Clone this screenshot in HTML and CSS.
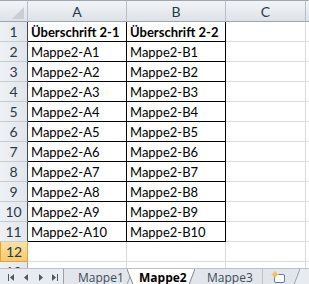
FILE: index.html
```html
<!DOCTYPE html>
<html>
<head>
<meta charset="utf-8">
<link rel="stylesheet" href="styles.css">
</head>
<body>
<div class="sheet">
  <div class="grid">
    <div class="ch corner"><svg width="12" height="12" viewBox="0 0 12 12"><path d="M12 0 L12 12 L0 12 Z" fill="#c9ced5"/></svg></div>
    <div class="ch">A</div>
    <div class="ch">B</div>
    <div class="ch">C</div>
    <div class="ch last"></div>

    <div class="rh dk">1</div><div class="c bl h">Überschrift 2-1</div><div class="c bl h">Überschrift 2-2</div><div class="c"></div><div class="c last"></div>
    <div class="rh dk">2</div><div class="c bl">Mappe2-A1</div><div class="c bl">Mappe2-B1</div><div class="c"></div><div class="c last"></div>
    <div class="rh dk">3</div><div class="c bl">Mappe2-A2</div><div class="c bl">Mappe2-B2</div><div class="c"></div><div class="c last"></div>
    <div class="rh dk">4</div><div class="c bl">Mappe2-A3</div><div class="c bl">Mappe2-B3</div><div class="c"></div><div class="c last"></div>
    <div class="rh dk">5</div><div class="c bl">Mappe2-A4</div><div class="c bl">Mappe2-B4</div><div class="c"></div><div class="c last"></div>
    <div class="rh dk">6</div><div class="c bl">Mappe2-A5</div><div class="c bl">Mappe2-B5</div><div class="c"></div><div class="c last"></div>
    <div class="rh dk">7</div><div class="c bl">Mappe2-A6</div><div class="c bl">Mappe2-B6</div><div class="c"></div><div class="c last"></div>
    <div class="rh dk">8</div><div class="c bl">Mappe2-A7</div><div class="c bl">Mappe2-B7</div><div class="c"></div><div class="c last"></div>
    <div class="rh dk">9</div><div class="c bl">Mappe2-A8</div><div class="c bl">Mappe2-B8</div><div class="c"></div><div class="c last"></div>
    <div class="rh dk">10</div><div class="c bl">Mappe2-A9</div><div class="c bl">Mappe2-B9</div><div class="c"></div><div class="c last"></div>
    <div class="rh dk">11</div><div class="c bl">Mappe2-A10</div><div class="c bl">Mappe2-B10</div><div class="c"></div><div class="c last"></div>
    <div class="rh sel">12</div><div class="c"></div><div class="c"></div><div class="c"></div><div class="c last"></div>
    <div class="rh">13</div><div class="c"></div><div class="c"></div><div class="c"></div><div class="c last"></div>
  </div>
  <div class="tabbar">
    <div class="nav">
      <svg width="63" height="15" viewBox="0 0 63 15">
        <g fill="#4f5764">
          <rect x="8" y="4" width="1" height="7"/>
          <path d="M14 4 L10 7.5 L14 11 Z"/>
          <path d="M28 4 L24 7.5 L28 11 Z"/>
          <path d="M39 4 L43 7.5 L39 11 Z"/>
          <path d="M52 4 L56 7.5 L52 11 Z"/>
          <rect x="57" y="4" width="1" height="7"/>
        </g>
      </svg>
    </div>
    <div class="tabs">
      <div class="tab t1">
        <svg class="shape" width="70" height="16" viewBox="0 0 70 16"><path d="M0.5 0 V15.5 H64 L70 0" fill="#e2e6eb" stroke="#98a1ac"/></svg>
        <span>Mappe1</span>
      </div>
      <div class="tab t2 active">
        <svg class="shape" width="68" height="16" viewBox="0 0 68 16"><path d="M0 0 L6 15.5 H62 L68 0" fill="#ffffff" stroke="#7f8790"/></svg>
        <span>Mappe2</span>
      </div>
      <div class="tab t3">
        <svg class="shape" width="79" height="16" viewBox="0 0 79 16"><path d="M0 0 V15.5 H73 L79 0" fill="#e2e6eb" stroke="#98a1ac"/></svg>
        <span>Mappe3</span>
      </div>
      <div class="tab t4">
        <svg class="shape" width="38" height="16" viewBox="0 0 38 16"><path d="M0 0 V15.5 H32 L38 0" fill="#e2e6eb" stroke="#98a1ac"/></svg>
        <svg class="ins" width="15" height="13" viewBox="0 0 15 13">
          <rect x="3.5" y="3.5" width="10" height="8" rx="1.5" fill="#fff" stroke="#5b7fb0"/>
          <circle cx="4" cy="3.5" r="2.3" fill="#f4b23a"/>
          <path d="M4 0 V7 M0.5 3.5 H7.5" stroke="#f7c860" stroke-width="1"/>
        </svg>
      </div>
    </div>
  </div>
</div>
</body>
</html>
```

FILE: styles.css
```css
html, body {
  margin: 0;
  padding: 0;
  background: #ffffff;
}
.sheet {
  width: 309px;
  height: 284px;
  overflow: hidden;
  display: flex;
  flex-direction: column;
  font-family: "Lato", "Liberation Sans", sans-serif;
  font-size: 13px;
  color: #000;
}
.grid {
  display: grid;
  grid-template-columns: 28px 99px 99px 80px 3px;
  grid-template-rows: 22px repeat(13, 20px);
  height: 268px;
  overflow: hidden;
  flex: none;
}
.ch {
  box-sizing: border-box;
  background: linear-gradient(#f2f4f7, #dde2e8);
  border-top: 1px solid #9ea6b0;
  border-bottom: 1px solid #9ea6b0;
  border-right: 1px solid #b8bfc8;
  color: #283849;
  display: flex;
  align-items: center;
  justify-content: center;
  font-size: 14px;
}
.ch.last { border-right: none; }
.corner {
  justify-content: flex-end;
  align-items: flex-end;
  padding: 0 3px 2px 0;
}
.rh {
  box-sizing: border-box;
  background: linear-gradient(90deg, #eef1f4, #e2e6eb);
  border-right: 1px solid #9ea6b0;
  border-bottom: 1px solid #c5cbd3;
  color: #283849;
  display: flex;
  align-items: center;
  justify-content: center;
  font-size: 14px;
}
.rh.dk { border-right-color: #44484d; }
.rh.sel {
  background: linear-gradient(#fbe2a6, #f7ca6a);
  border: 1px solid #e8a23c;
  border-top: none;
}
.c {
  box-sizing: border-box;
  border-right: 1px solid #d8dadd;
  border-bottom: 1px solid #d8dadd;
  padding-left: 3px;
  display: flex;
  align-items: center;
  white-space: nowrap;
  overflow: hidden;
}
.c.last { border-right: none; }
.c.bl {
  border-right-color: #000;
  border-bottom-color: #000;
}
.c.h { font-weight: bold; }
.tabbar {
  flex: 1;
  display: flex;
  background: #e8ecf1;
  border-top: 1px solid #b9c0c9;
}
.nav {
  width: 63px;
  flex: none;
  display: flex;
  align-items: center;
}
.tabs {
  display: flex;
  align-items: flex-start;
}
.tab {
  position: relative;
  box-sizing: border-box;
  height: 16px;
  display: flex;
  align-items: center;
  color: #3d4b5e;
  font-family: "Open Sans", "Noto Sans", sans-serif;
  font-size: 12px;
}
.tab .shape {
  position: absolute;
  left: 0;
  top: 0;
}
.tab span {
  position: relative;
  line-height: 15px;
}
.t1 { width: 70px; padding-left: 15px; }
.t2 { width: 68px; margin-left: -6px; padding-left: 12px; z-index: 2; }
.t2 span { font-weight: bold; color: #000; }
.t3 { width: 79px; margin-left: -6px; padding-left: 18px; }
.t4 { width: 38px; margin-left: -6px; padding-left: 9px; }
.ins { position: relative; }
```
